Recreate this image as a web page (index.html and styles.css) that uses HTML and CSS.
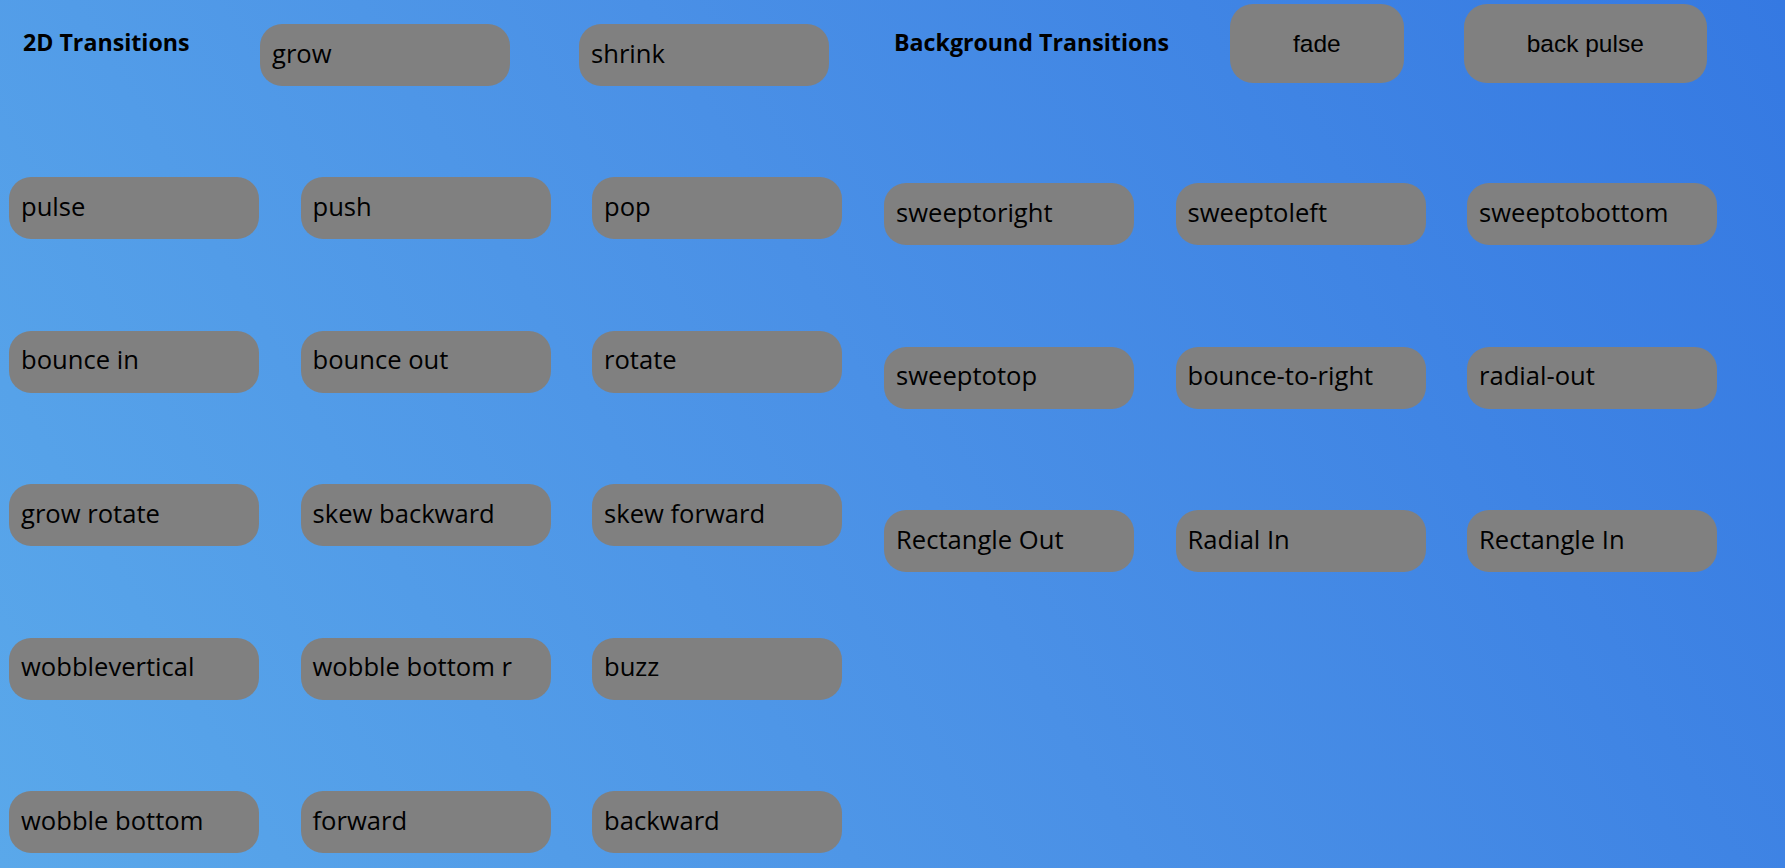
FILE: index.html
```html
<!DOCTYPE html>
<html lang="en">
<head>
<meta charset="utf-8">
<title>Transitions</title>
<link rel="stylesheet" href="styles.css">
</head>
<body>
<main class="page">
  <section class="panel panel-2d">
    <div class="panel-head head-2d">
      <h2 class="title title-2d">2D Transitions</h2>
      <button class="btn">grow</button>
      <button class="btn btn-shrink">shrink</button>
    </div>
    <div class="grid grid-2d">
      <button class="btn">pulse</button>
      <button class="btn">push</button>
      <button class="btn">pop</button>
      <button class="btn">bounce in</button>
      <button class="btn">bounce out</button>
      <button class="btn">rotate</button>
      <button class="btn">grow rotate</button>
      <button class="btn">skew backward</button>
      <button class="btn">skew forward</button>
      <button class="btn">wobblevertical</button>
      <button class="btn">wobble bottom r</button>
      <button class="btn">buzz</button>
      <button class="btn">wobble bottom</button>
      <button class="btn">forward</button>
      <button class="btn">backward</button>
    </div>
  </section>
  <section class="panel panel-bg">
    <div class="panel-head head-bg">
      <h2 class="title title-bg">Background Transitions</h2>
      <button class="btn-center">fade</button>
      <button class="btn-center btn-backpulse">back pulse</button>
    </div>
    <div class="grid grid-bg">
      <button class="btn">sweeptoright</button>
      <button class="btn">sweeptoleft</button>
      <button class="btn">sweeptobottom</button>
      <button class="btn">sweeptotop</button>
      <button class="btn">bounce-to-right</button>
      <button class="btn">radial-out</button>
      <button class="btn">Rectangle Out</button>
      <button class="btn">Radial In</button>
      <button class="btn">Rectangle In</button>
    </div>
  </section>
</main>
</body>
</html>
```
FILE: styles.css
```css
html, body {
  margin: 0;
  padding: 0;
}

body {
  min-height: 100vh;
  background: linear-gradient(60deg, #5aa8ea 0%, #4a90e6 50%, #3579e2 100%);
  font-family: "Open Sans", "Noto Sans", sans-serif;
  color: #000;
}

.page {
  display: flex;
  align-items: flex-start;
}

.panel-2d {
  width: 866px;
  padding-left: 9px;
  flex-shrink: 0;
}

.panel-bg {
  padding-left: 9px;
}

.panel-head {
  display: flex;
  align-items: flex-start;
}

.head-2d {
  padding-top: 24px;
}

.head-bg {
  padding-top: 4px;
}

.title {
  margin: 0;
  font-family: "Open Sans", "Noto Sans", sans-serif;
  font-weight: 700;
  font-size: 23.2px;
  line-height: 1;
  flex-shrink: 0;
  white-space: nowrap;
}

.title-2d {
  width: 237px;
  margin-left: 14px;
  margin-top: 7px;
}

.title-bg {
  width: 336px;
  margin-left: 10px;
  margin-top: 27px;
}

.btn {
  display: flex;
  align-items: center;
  width: 250px;
  height: 62px;
  padding: 0 12px 4px;
  box-sizing: border-box;
  border: none;
  border-radius: 22px;
  background: #808080;
  color: #000;
  font-family: "Open Sans", "Noto Sans", sans-serif;
  font-size: 25.6px;
  text-align: left;
  white-space: nowrap;
  overflow: hidden;
  flex-shrink: 0;
}

.btn-shrink {
  margin-left: 69px;
}

.btn-center {
  height: 79px;
  padding: 0 63px;
  border: none;
  border-radius: 23px;
  background: #808080;
  color: #000;
  font-family: "Liberation Sans", Arial, sans-serif;
  font-size: 24.5px;
  text-align: center;
  white-space: nowrap;
  flex-shrink: 0;
}

.btn-backpulse {
  margin-left: 60px;
}

.grid {
  display: grid;
  grid-template-columns: repeat(3, 250px);
  column-gap: 41.5px;
}

.grid-2d {
  margin-top: 91px;
  row-gap: 91.5px;
}

.grid-bg {
  margin-top: 100px;
  row-gap: 101.5px;
}
```
